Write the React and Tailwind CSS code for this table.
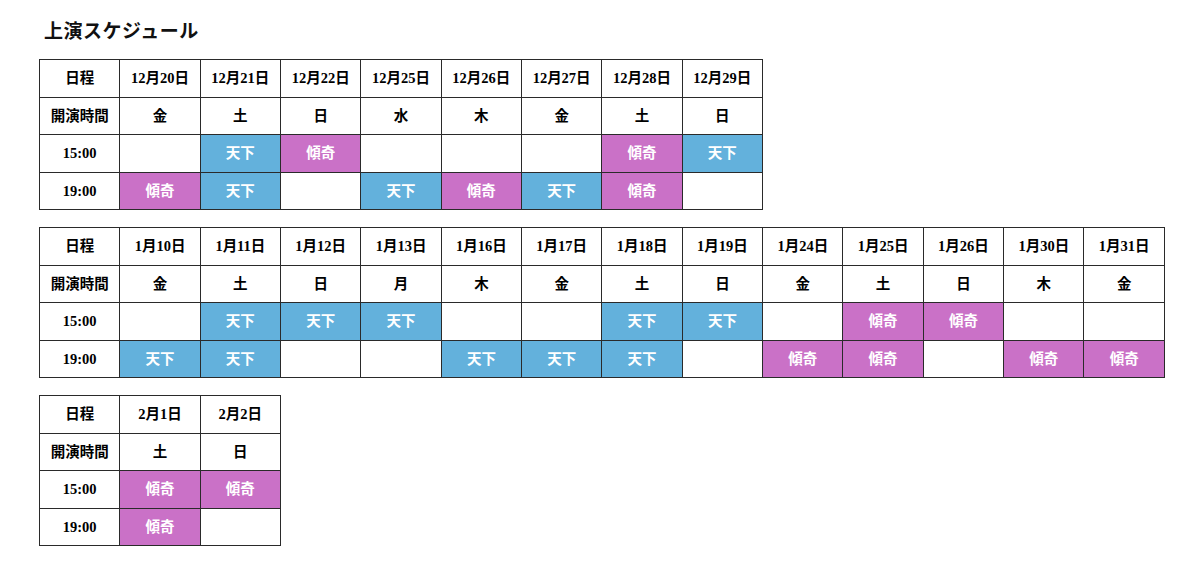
import React from "react";

const B = "天下";
const K = "傾奇";

const tables = [
  {
    w: "w-[724px]",
    dates: ["12月20日", "12月21日", "12月22日", "12月25日", "12月26日", "12月27日", "12月28日", "12月29日"],
    days: ["金", "土", "日", "水", "木", "金", "土", "日"],
    r15: ["", B, K, "", "", "", K, B],
    r19: [K, B, "", B, K, B, K, ""],
  },
  {
    w: "w-[1126px]",
    dates: ["1月10日", "1月11日", "1月12日", "1月13日", "1月16日", "1月17日", "1月18日", "1月19日", "1月24日", "1月25日", "1月26日", "1月30日", "1月31日"],
    days: ["金", "土", "日", "月", "木", "金", "土", "日", "金", "土", "日", "木", "金"],
    r15: ["", B, B, B, "", "", B, B, "", K, K, "", ""],
    r19: [B, B, "", "", B, B, B, "", K, K, "", K, K],
  },
  {
    w: "w-[242px]",
    dates: ["2月1日", "2月2日"],
    days: ["土", "日"],
    r15: [K, K],
    r19: [K, ""],
  },
];

function Cell({ v }) {
  const cls =
    v === B
      ? "bg-[#63b1dc] text-white"
      : v === K
      ? "bg-[#ca71c7] text-white"
      : "bg-white text-black";
  return (
    <td className={`border border-[#2a2a2a] text-center align-middle ${cls}`}>{v}</td>
  );
}

function Head({ children }) {
  return (
    <td className="border border-[#2a2a2a] text-center align-middle bg-white text-black">{children}</td>
  );
}

export default function App() {
  return (
    <div
      className="w-[1200px] h-[564px] bg-white pl-[39px] pt-[19px] text-[#111]"
      style={{ fontFamily: '"Liberation Serif", "Noto Sans CJK JP", serif' }}
    >
      <h1 className="text-[19px] font-bold leading-[26px] pl-[5px] mb-[14px] tracking-[0.5px]">上演スケジュール</h1>
      <div className="flex flex-col gap-[17px]">
        {tables.map((t, i) => (
          <table
            key={i}
            className={`${t.w} table-fixed border-collapse border-[1.5px] border-[#2a2a2a] text-[14.5px] font-bold leading-[18px]`}
          >
            <tbody>
              <tr className="h-[37.5px]">
                <Head>日程</Head>
                {t.dates.map((d, j) => (
                  <Head key={j}>{d}</Head>
                ))}
              </tr>
              <tr className="h-[37.5px]">
                <Head>開演時間</Head>
                {t.days.map((d, j) => (
                  <Head key={j}>{d}</Head>
                ))}
              </tr>
              <tr className="h-[37.5px]">
                <Head>15:00</Head>
                {t.r15.map((v, j) => (
                  <Cell key={j} v={v} />
                ))}
              </tr>
              <tr className="h-[37.5px]">
                <Head>19:00</Head>
                {t.r19.map((v, j) => (
                  <Cell key={j} v={v} />
                ))}
              </tr>
            </tbody>
          </table>
        ))}
      </div>
    </div>
  );
}
